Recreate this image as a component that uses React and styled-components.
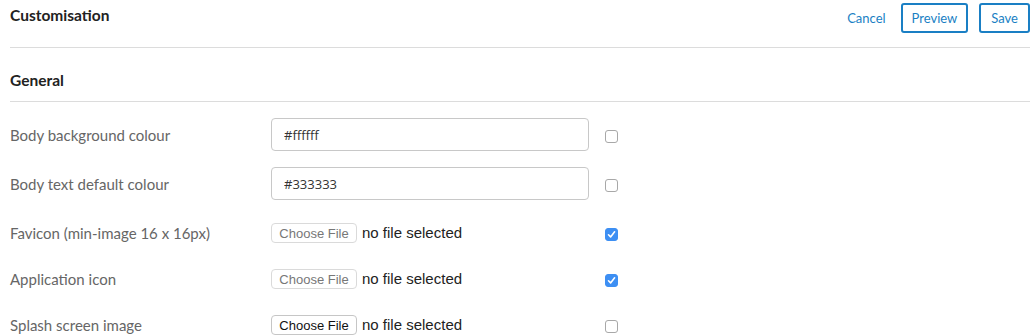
import React from "react";
import styled, { createGlobalStyle } from "styled-components";

const Global = createGlobalStyle`
  html, body { margin: 0; padding: 0; background: #fff; }
  body { font-family: Lato, "Open Sans", sans-serif; }
`;

const Page = styled.div`
  padding: 0 6px 0 10px;
`;

const Header = styled.div`
  display: flex;
  align-items: center;
  justify-content: space-between;
  height: 48px;
  padding-bottom: 11px;
  box-sizing: border-box;
  border-bottom: 1px solid #dcdcdc;
`;

const Title = styled.h1`
  margin: 0;
  font-size: 15.5px;
  font-weight: 700;
  color: #222;
  align-self: flex-start;
  margin-top: 6px;
`;

const Actions = styled.div`
  display: flex;
  align-items: center;
  gap: 11px;
`;

const LinkButton = styled.button`
  background: none;
  border: none;
  padding: 0 4px 0 0;
  font-family: inherit;
  font-size: 13px;
  color: #1a7fc4;
  cursor: pointer;
`;

const OutlineButton = styled.button`
  background: #fff;
  border: 2px solid #1a7fc4;
  border-radius: 3px;
  height: 30px;
  padding: 0 ${(p) => p.$pad || 9}px;
  font-family: inherit;
  font-size: 13px;
  color: #1a7fc4;
  cursor: pointer;
`;

const Section = styled.div`
  border-bottom: 1px solid #dcdcdc;
  padding: 24px 0 12px;
`;

const SectionTitle = styled.h2`
  margin: 0;
  font-size: 15.5px;
  font-weight: 700;
  color: #222;
  line-height: 17px;
`;

const Rows = styled.div`
  display: flex;
  flex-direction: column;
  gap: 16px;
  padding-top: 16px;
`;

const Row = styled.div`
  box-sizing: border-box;
  display: grid;
  grid-template-columns: 245px 318px 13px;
  column-gap: 16px;
  align-items: center;
  height: ${(p) => (p.$file ? 30 : 33)}px;
  padding-top: ${(p) => (p.$file ? 4 : 0)}px;
`;

const Label = styled.label`
  font-size: 15px;
  color: #666;
`;

const TextInput = styled.input`
  box-sizing: border-box;
  width: 318px;
  height: 33px;
  border: 1px solid #c8c8c8;
  border-radius: 4px;
  padding: 0 12px;
  font-family: "Open Sans", sans-serif;
  font-size: 13px;
  color: #333;
  outline: none;
`;

const FileWrap = styled.div`
  display: flex;
  align-items: center;
  gap: 5px;
`;

const FileButton = styled.span`
  box-sizing: border-box;
  display: inline-flex;
  align-items: center;
  justify-content: center;
  width: 86px;
  height: 20px;
  border: 1px solid ${(p) => (p.$active ? "#c6c6c6" : "#dadada")};
  border-radius: 4px;
  background: #fff;
  font-family: "Liberation Sans", Arial, sans-serif;
  font-size: 13px;
  color: ${(p) => (p.$active ? "#111" : "#777")};
`;

const FileText = styled.span`
  font-family: "Liberation Sans", Arial, sans-serif;
  font-size: 15px;
  color: #222;
  margin-top: -2px;
`;

const Check = styled.span`
  box-sizing: border-box;
  width: 13px;
  height: 13px;
  border-radius: 3px;
  border: 1px solid ${(p) => (p.$on ? "#3d8ff3" : "#a8a8a8")};
  background: ${(p) => (p.$on ? "#3d8ff3" : "#fff")};
  display: flex;
  align-items: center;
  justify-content: center;
  margin-top: ${(p) => (p.$file ? 2 : 3)}px;
`;

const CheckBox = ({ on, file }) => (
  <Check $on={on} $file={file}>
    {on && (
      <svg width="9" height="9" viewBox="0 0 9 9">
        <path d="M1.5 4.8 L3.6 6.9 L7.6 1.8" fill="none" stroke="#fff" strokeWidth="1.6" strokeLinecap="round" strokeLinejoin="round" />
      </svg>
    )}
  </Check>
);

const rows = [
  { label: "Body background colour", value: "#ffffff", on: false },
  { label: "Body text default colour", value: "#333333", on: false },
  { label: "Favicon (min-image 16 x 16px)", file: true, on: true },
  { label: "Application icon", file: true, on: true },
  { label: "Splash screen image", file: true, on: false, active: true },
];

export default function App() {
  return (
    <>
      <Global />
      <Page>
        <Header>
          <Title>Customisation</Title>
          <Actions>
            <LinkButton>Cancel</LinkButton>
            <OutlineButton $pad={9}>Preview</OutlineButton>
            <OutlineButton $pad={10}>Save</OutlineButton>
          </Actions>
        </Header>
        <Section>
          <SectionTitle>General</SectionTitle>
        </Section>
        <Rows>
          {rows.map((r) => (
            <Row key={r.label} $file={r.file}>
              <Label>{r.label}</Label>
              {r.file ? (
                <FileWrap>
                  <FileButton $active={r.active}>Choose File</FileButton>
                  <FileText>no file selected</FileText>
                </FileWrap>
              ) : (
                <TextInput defaultValue={r.value} />
              )}
              <CheckBox on={r.on} file={r.file} />
            </Row>
          ))}
        </Rows>
      </Page>
    </>
  );
}
